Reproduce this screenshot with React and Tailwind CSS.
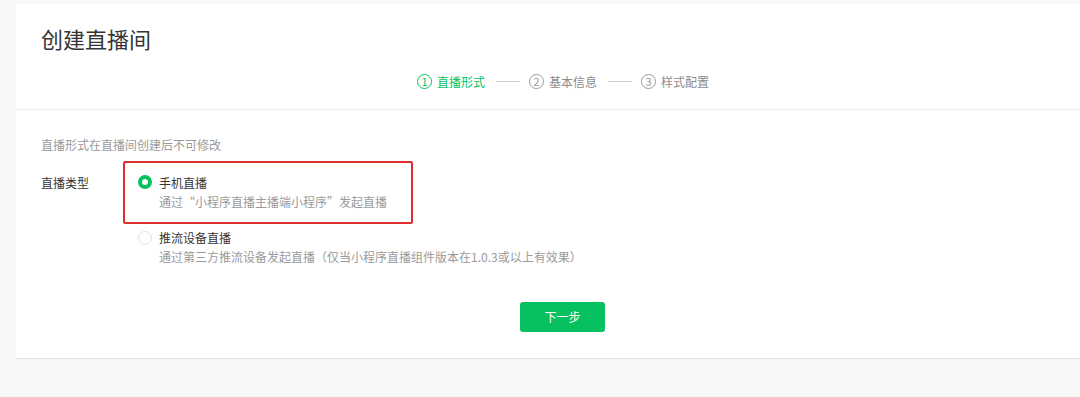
import React from "react";

const font = { fontFamily: '"Noto Sans CJK SC", "Noto Sans", sans-serif' };

function Step({ n, label, active }) {
  const color = active ? "text-[#07c160] border-[#07c160]" : "text-[#9a9a9a] border-[#9a9a9a]";
  return (
    <div className={`flex items-center ${active ? "text-[#07c160]" : "text-[#8c8c8c]"}`}>
      <span
        className={`flex h-[15px] w-[15px] items-center justify-center rounded-full border text-[11px] leading-none ${color}`}
      >
        {n}
      </span>
      <span className="ml-[5px] text-[12px] leading-[19px]">{label}</span>
    </div>
  );
}

function Line() {
  return <div className="ml-[11px] mr-[9px] h-px w-[24px] bg-[#d0d0d0]" />;
}

export default function App() {
  return (
    <div className="min-h-[397px] w-[1080px] bg-[#f7f7f7] pt-[4px] pl-[16px]" style={font}>
      <div className="w-[1064px] border-b border-[#e4e4e4] bg-white">
        <div className="h-[106px] border-b border-[#eeeeee] pl-[25px] pt-[19px]">
          <div className="text-[22px] leading-[31px] text-[#353535]">创建直播间</div>
          <div className="mt-[18px] ml-[376px] flex items-center">
            <Step n="1" label="直播形式" active />
            <Line />
            <Step n="2" label="基本信息" />
            <Line />
            <Step n="3" label="样式配置" />
          </div>
        </div>
        <div className="pl-[25px] pt-[25px] pb-[26px]">
          <div className="text-[12px] leading-[19px] text-[#9a9a9a]">直播形式在直播间创建后不可修改</div>
          <div className="mt-[7px] flex">
            <div className="w-[82px] pt-[12px] text-[12px] leading-[19px] text-[#353535]">直播类型</div>
            <div className="flex flex-col">
              <div className="w-[290px] rounded-[2px] border-2 border-[#dd2f2c] pl-[13px] pt-[10px] pb-[11px]">
                <div className="flex items-start">
                  <span className="mt-[2px] flex h-[14px] w-[14px] items-center justify-center rounded-full bg-[#07c160]">
                    <span className="h-[6px] w-[6px] rounded-full bg-white" />
                  </span>
                  <div className="ml-[7px]">
                    <div className="text-[12px] leading-[19px] text-[#353535]">手机直播</div>
                    <div className="text-[12px] leading-[19px] text-[#9a9a9a]">通过“小程序直播主播端小程序”发起直播</div>
                  </div>
                </div>
              </div>
              <div className="mt-[4px] flex items-start pl-[15px]">
                <span className="mt-[3px] h-[14px] w-[14px] rounded-full border border-[#e2e2e2] bg-white" />
                <div className="ml-[7px]">
                  <div className="text-[12px] leading-[19px] text-[#353535]">推流设备直播</div>
                  <div className="text-[12px] leading-[19px] text-[#9a9a9a]">
                    通过第三方推流设备发起直播（仅当小程序直播组件版本在1.0.3或以上有效果）
                  </div>
                </div>
              </div>
            </div>
          </div>
          <div className="mt-[36px] ml-[479px] flex h-[30px] w-[85px] items-center justify-center rounded-[3px] bg-[#07c160] text-[12px] text-white">
            下一步
          </div>
        </div>
      </div>
    </div>
  );
}
